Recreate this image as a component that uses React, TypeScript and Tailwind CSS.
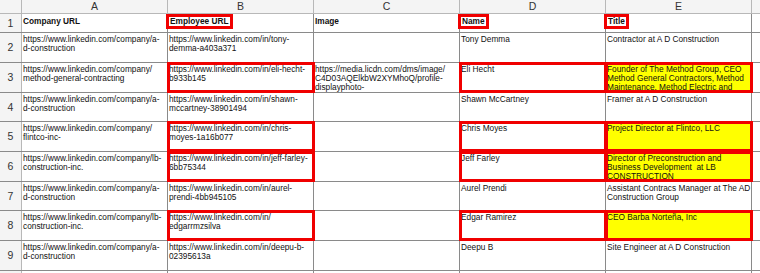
type Cell = { lines: string[]; box?: boolean; fill?: boolean };

const a1 = ['https://www.linkedin.com/company/a-', 'd-construction'];
const lb = ['https://www.linkedin.com/company/lb-', 'construction-inc.'];

const rows: { h: string; cells: Cell[] }[] = [
  {
    h: 'h-[30px]',
    cells: [
      { lines: a1 },
      { lines: ['https://www.linkedin.com/in/tony-', 'demma-a403a371'] },
      { lines: [] },
      { lines: ['Tony Demma'] },
      { lines: ['Contractor at A D Construction'] },
    ],
  },
  {
    h: 'h-[30px]',
    cells: [
      { lines: ['https://www.linkedin.com/company/', 'method-general-contracting'] },
      { lines: ['https://www.linkedin.com/in/eli-hecht-', 'b933b145'], box: true },
      { lines: ['https://media.licdn.com/dms/image/', 'C4D03AQElkbW2XYMhoQ/profile-', 'displayphoto-'] },
      { lines: ['Eli Hecht'], box: true },
      {
        lines: ['Founder of The Method Group, CEO', 'Method General Contractors, Method', 'Maintenance, Method Electric and'],
        box: true,
        fill: true,
      },
    ],
  },
  {
    h: 'h-[29px]',
    cells: [
      { lines: a1 },
      { lines: ['https://www.linkedin.com/in/shawn-', 'mccartney-38901494'] },
      { lines: [] },
      { lines: ['Shawn McCartney'] },
      { lines: ['Framer at A D Construction'] },
    ],
  },
  {
    h: 'h-[30px]',
    cells: [
      { lines: ['https://www.linkedin.com/company/', 'flintco-inc-'] },
      { lines: ['https://www.linkedin.com/in/chris-', 'moyes-1a16b077'], box: true },
      { lines: [] },
      { lines: ['Chris Moyes'], box: true },
      { lines: ['Project Director at Flintco, LLC'], box: true, fill: true },
    ],
  },
  {
    h: 'h-[30px]',
    cells: [
      { lines: lb },
      { lines: ['https://www.linkedin.com/in/jeff-farley-', '6bb75344'], box: true },
      { lines: [] },
      { lines: ['Jeff Farley'], box: true },
      {
        lines: ['Director of Preconstruction and', 'Business Development  at LB', 'CONSTRUCTION'],
        box: true,
        fill: true,
      },
    ],
  },
  {
    h: 'h-[29px]',
    cells: [
      { lines: a1 },
      { lines: ['https://www.linkedin.com/in/aurel-', 'prendi-4bb945105'] },
      { lines: [] },
      { lines: ['Aurel Prendi'] },
      { lines: ['Assistant Contracs Manager at The AD', 'Construction Group'] },
    ],
  },
  {
    h: 'h-[30px]',
    cells: [
      { lines: lb },
      { lines: ['https://www.linkedin.com/in/', 'edgarrmzsilva'], box: true },
      { lines: [] },
      { lines: ['Edgar Ramirez'], box: true },
      { lines: ['CEO Barba Norteña, Inc'], box: true, fill: true },
    ],
  },
  {
    h: 'h-[30px]',
    cells: [
      { lines: a1 },
      { lines: ['https://www.linkedin.com/in/deepu-b-', '02395613a'] },
      { lines: [] },
      { lines: ['Deepu B'] },
      { lines: ['Site Engineer at A D Construction'] },
    ],
  },
  {
    h: 'h-[30px]',
    cells: [
      { lines: a1 },
      { lines: ['https://www.linkedin.com/in/david-', 'lopez-5a1b2c3d'] },
      { lines: [] },
      { lines: ['David Lopez'] },
      { lines: ['Executive Assistant at A D Construction'] },
    ],
  },
];

const cols = ['A', 'B', 'C', 'D', 'E', ''];

const DataCell = ({ cell }: { cell: Cell }) => (
  <div
    className={`w-[146px] shrink-0 border-r border-[#8a8a8a] px-[1px] pt-[2px] overflow-hidden ${
      cell.fill ? 'bg-[#ffff00]' : 'bg-white'
    } ${cell.box ? 'relative z-10 outline-[3px] outline-solid outline-[#f00000] -outline-offset-2' : ''}`}
  >
    {cell.lines.map((l, i) => (
      <div key={i} className="whitespace-pre">
        {l}
      </div>
    ))}
  </div>
);

const HeadText = ({ text, box }: { text: string; box?: boolean }) => (
  <div className="w-[146px] shrink-0 border-r border-[#8a8a8a] bg-white pl-[1px] pt-[3px] font-bold">
    <span className={box ? 'inline-block outline-[3px] outline-solid outline-[#f00000] px-[1px]' : ''}>
      {text}
    </span>
  </div>
);

const App = () => {
  return (
    <div
      className="w-[760px] h-[273px] overflow-hidden bg-white text-[8.3px] leading-[9px] text-[#111]"
      style={{ fontFamily: '"Liberation Sans", Arial, sans-serif' }}
    >
      <div className="flex h-[14px] bg-[#f4f4f4] border-b border-[#b8b8b8] text-[10.5px] leading-[13px] text-[#333]">
        <div className="w-[22px] shrink-0 border-r border-[#b8b8b8]" />
        {cols.map((c, i) => (
          <div key={i} className="w-[146px] shrink-0 border-r border-[#b8b8b8] text-center">
            {c}
          </div>
        ))}
      </div>

      <div className="flex h-[19px] border-b border-[#8a8a8a]">
        <div className="w-[22px] shrink-0 border-r border-[#b8b8b8] bg-[#f4f4f4] text-center text-[10.5px] leading-[19px] text-[#333]">
          1
        </div>
        <HeadText text="Company URL" />
        <HeadText text="Employee URL" box />
        <HeadText text="Image" />
        <HeadText text="Name" box />
        <HeadText text="Title" box />
        <div className="w-[146px] shrink-0 bg-white" />
      </div>

      {rows.map((r, ri) => (
        <div key={ri} className={`flex ${r.h} border-b border-[#8a8a8a]`}>
          <div className="w-[22px] shrink-0 border-r border-[#b8b8b8] bg-[#f4f4f4] flex items-center justify-center text-[10.5px] text-[#333]">
            {ri + 2}
          </div>
          {r.cells.map((c, ci) => (
            <DataCell key={ci} cell={c} />
          ))}
          <div className="w-[146px] shrink-0 bg-white" />
        </div>
      ))}
    </div>
  );
};

export default App;
